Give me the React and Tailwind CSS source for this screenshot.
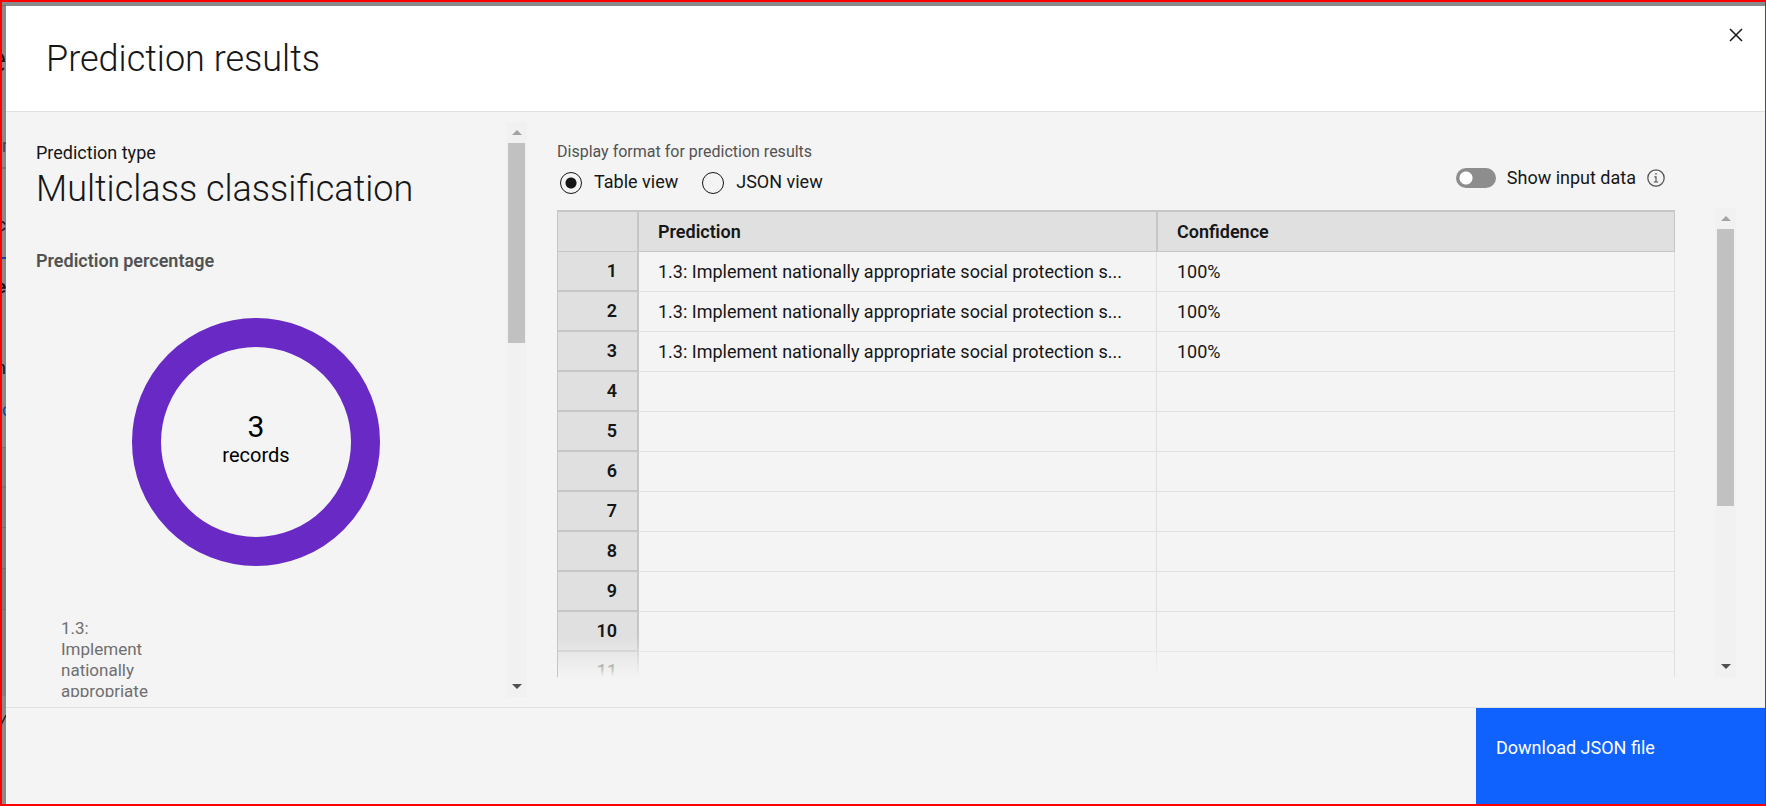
const label = "1.3: Implement nationally appropriate social protection s...";

const results = [
  { prediction: label, confidence: "100%" },
  { prediction: label, confidence: "100%" },
  { prediction: label, confidence: "100%" },
];

const rows = Array.from({ length: 11 }, (_, i) => results[i] ?? { prediction: "", confidence: "" });

function ScrollButton({ direction }) {
  return (
    <button type="button" aria-label={`Scroll ${direction}`} className="flex h-[21px] w-full shrink-0 items-center justify-center">
      <svg viewBox="0 0 10 5" width="10" height="5" aria-hidden="true">
        {direction === "up" ? <path d="M0 5 5 0l5 5z" fill="#a3a3a3" /> : <path d="M0 0h10L5 5z" fill="#505050" />}
      </svg>
    </button>
  );
}

function Scrollbar({ thumb }) {
  return (
    <div className="flex w-[21px] shrink-0 flex-col self-stretch bg-[#f1f1f1]">
      <ScrollButton direction="up" />
      <div className="min-h-0 flex-1 px-[2px]">
        <div className={`bg-[#c1c1c1] ${thumb}`} />
      </div>
      <ScrollButton direction="down" />
    </div>
  );
}

/* The dimmed page that shows past the dialog's left edge. */
function PageBehind() {
  return (
    <div aria-hidden="true" className="absolute inset-y-0 left-0 flex w-1 flex-col overflow-hidden text-[18px] leading-5 text-[#111111]">
      <div className="h-[3px] shrink-0" />
      <div className="h-px shrink-0 bg-[#777777]" />
      <div className="flex h-[130px] shrink-0 items-start justify-end pt-11 text-[36px] font-light">e</div>
      <div className="flex h-[33px] shrink-0 items-start justify-start border-b-2 border-[#777777] text-[#444444]">r</div>
      <div className="flex h-[88px] shrink-0 items-center justify-end pt-6">c</div>
      <div className="h-[2px] shrink-0 bg-[#0b46a8]" />
      <div className="flex h-[56px] shrink-0 items-center justify-end font-bold">e</div>
      <div className="flex h-[85px] shrink-0 items-center justify-end pt-5">n</div>
      <div className="flex h-[48px] shrink-0 items-start justify-start border-b border-[#777777] text-[#0b46a8]">c</div>
      <div className="h-10 shrink-0 border-b-2 border-[#777777] bg-[#828282]" />
      <div className="h-10 shrink-0 border-b border-[#707070] bg-[#808080]" />
      <div className="h-[41px] shrink-0 border-b border-[#707070] bg-[#808080]" />
      <div className="h-[41px] shrink-0 border-b border-[#707070] bg-[#7c7c7c]" />
      <div className="h-[86px] shrink-0 bg-[#808080]" />
      <div className="flex h-[48px] shrink-0 items-center justify-end pt-1 italic">/</div>
    </div>
  );
}

function SummaryPanel() {
  return (
    <section className="flex w-[521px] shrink-0 py-[10px]">
      <div className="min-h-0 flex-1 overflow-hidden pt-[19px] pl-[30px]">
        <p className="text-[18px] leading-6 text-[#161616]">Prediction type</p>
        <h2 className="pt-[2px] text-[36px] leading-[44px] font-light text-[#161616]">Multiclass classification</h2>
        <h3 className="mt-[38px] text-[18px] leading-6 font-semibold text-[#525252]">Prediction percentage</h3>
        <div className="mt-[45px] flex justify-center pr-[30px]">
          <div className="flex size-[248px] flex-col items-center rounded-full border-[29px] border-[#6929c4] pt-16 text-black">
            <span className="text-[30px] leading-8">3</span>
            <span className="text-[20px] leading-6">records</span>
          </div>
        </div>
        <p className="mt-[52px] ml-[25px] w-[100px] text-[17px] leading-[21px] text-[#6f6f6f]">
          1.3: Implement nationally appropriate social protection
        </p>
      </div>
      <Scrollbar thumb="h-[200px]" />
    </section>
  );
}

function Radio({ id, text, checked }) {
  return (
    <div className="flex items-center gap-3">
      <input
        type="radio"
        name="format"
        id={id}
        defaultChecked={checked}
        className="size-[22px] appearance-none rounded-full border border-[#161616] bg-[#f4f4f4] checked:bg-[radial-gradient(circle,#161616_0_5px,transparent_6px)]"
      />
      <label htmlFor={id} className="pb-[2px] text-[18px] leading-6 text-[#161616]">
        {text}
      </label>
    </div>
  );
}

function InfoIcon() {
  return (
    <svg viewBox="0 0 16 16" width="18" height="18" fill="#525252" aria-hidden="true">
      <path d="M8.5 11V6.5h-2v1h1V11H6v1h4v-1zM8 3.5a.75.75 0 1 0 0 1.5.75.75 0 0 0 0-1.5z" />
      <path d="M8 15a7 7 0 1 1 0-14 7 7 0 0 1 0 14zM8 2a6 6 0 1 0 0 12A6 6 0 0 0 8 2z" transform="translate(8 8) scale(1.12) translate(-8 -8)" />
    </svg>
  );
}

function ResultsTable() {
  return (
    <table className="w-full table-fixed border-separate border-spacing-0 text-left text-[18px] leading-6 text-[#161616]">
      <thead>
        <tr className="h-[42px] bg-[#e0e0e0]">
          <td className="w-[82px] border-t-2 border-r-2 border-b border-l border-[#c6c6c6]" />
          <th scope="col" className="border-t-2 border-r border-b border-[#c6c6c6] px-[19px] py-0 font-semibold">
            Prediction
          </th>
          <th scope="col" className="border border-t-2 border-[#c6c6c6] px-[19px] py-0 font-semibold">
            Confidence
          </th>
        </tr>
      </thead>
      <tbody>
        {rows.map((row, i) => (
          <tr key={i} className="h-10">
            <th scope="row" className="border-r-2 border-b-2 border-l border-[#c6c6c6] bg-[#e0e0e0] py-0 pr-5 text-right font-semibold">
              {i + 1}
            </th>
            <td className="truncate border-r border-b border-[#e0e0e0] px-[19px] py-0">{row.prediction}</td>
            <td className="border-r border-b border-[#e0e0e0] px-5 py-0">{row.confidence}</td>
          </tr>
        ))}
      </tbody>
    </table>
  );
}

function ResultsPanel() {
  return (
    <section className="flex min-w-0 flex-1 flex-col pt-[30px] pr-[29px] pb-[30px] pl-[30px]">
      <div className="flex h-[66px] shrink-0 items-start justify-between pr-[71px]">
        <fieldset>
          <legend className="text-[16px] leading-5 text-[#525252]">Display format for prediction results</legend>
          <div className="mt-2 flex gap-6 pl-[3px]">
            <Radio id="table-view" text="Table view" checked />
            <Radio id="json-view" text="JSON view" />
          </div>
        </fieldset>
        <div className="flex items-center gap-[11px] pt-6">
          <input
            id="show-input"
            type="checkbox"
            role="switch"
            className="h-5 w-10 appearance-none rounded-full bg-[#8d8d8d] bg-[radial-gradient(circle_at_10px_10px,#ffffff_0_6px,transparent_7px)]"
          />
          <label htmlFor="show-input" className="text-[18px] leading-6 text-[#161616]">
            Show input data
          </label>
          <button type="button" aria-label="About input data">
            <InfoIcon />
          </button>
        </div>
      </div>
      <div className="flex min-h-0 flex-1 gap-10">
        <div className="relative min-w-0 flex-1 overflow-hidden pt-[2px]">
          <ResultsTable />
          <div className="pointer-events-none absolute inset-x-px bottom-0 h-10 bg-linear-to-b from-transparent to-[#f4f4f4]" />
        </div>
        <Scrollbar thumb="h-[277px]" />
      </div>
    </section>
  );
}

export default function App() {
  return (
    <div className="relative flex h-screen flex-col overflow-hidden border-t-2 border-r border-b-2 border-l-2 border-[#ff0000] bg-[#8a8a8a] pt-1 pl-1 font-[Roboto,sans-serif]">
      <PageBehind />
      <main role="dialog" aria-label="Prediction results" className="relative flex min-h-0 flex-1 flex-col bg-[#f4f4f4]">
        <header className="flex h-[106px] shrink-0 items-start justify-between border-b border-[#e0e0e0] bg-white pr-[22px] pl-10">
          <h1 className="pt-[31px] text-[36px] leading-[44px] font-light text-[#161616]">Prediction results</h1>
          <button type="button" aria-label="Close" className="mt-[22px] text-[#161616]">
            <svg viewBox="0 0 14 14" width="14" height="14" fill="none" stroke="currentColor" strokeWidth="1.5" aria-hidden="true">
              <path d="M1 1l12 12M13 1 1 13" />
            </svg>
          </button>
        </header>
        <div className="flex min-h-0 flex-1">
          <SummaryPanel />
          <ResultsPanel />
        </div>
        <footer className="flex h-[97px] shrink-0 justify-end border-t border-[#e0e0e0]">
          <button type="button" className="flex w-[289px] items-start bg-[#0f62fe] px-5 pt-7 text-left text-[18px] leading-6 text-white">
            Download JSON file
          </button>
        </footer>
      </main>
    </div>
  );
}
